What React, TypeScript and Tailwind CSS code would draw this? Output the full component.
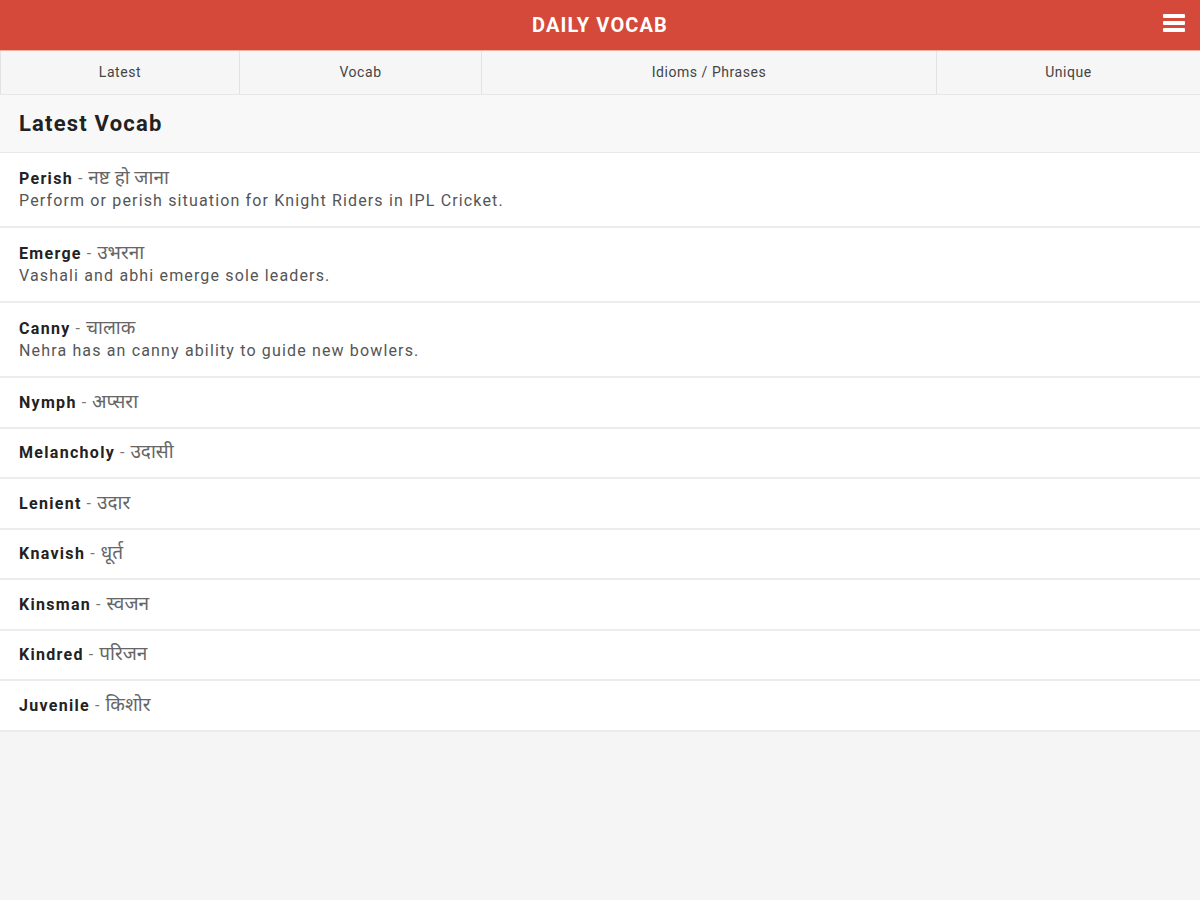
import React from "react";

const words: { w: string; h: string; s?: string }[] = [
  { w: "Perish", h: "नष्ट हो जाना", s: "Perform or perish situation for Knight Riders in IPL Cricket." },
  { w: "Emerge", h: "उभरना", s: "Vashali and abhi emerge sole leaders." },
  { w: "Canny", h: "चालाक", s: "Nehra has an canny ability to guide new bowlers." },
  { w: "Nymph", h: "अप्सरा" },
  { w: "Melancholy", h: "उदासी" },
  { w: "Lenient", h: "उदार" },
  { w: "Knavish", h: "धूर्त" },
  { w: "Kinsman", h: "स्वजन" },
  { w: "Kindred", h: "परिजन" },
  { w: "Juvenile", h: "किशोर" },
];

const font = { fontFamily: "Roboto, 'Noto Sans', 'Noto Sans Devanagari', 'Lohit Devanagari', sans-serif" };

export default function App() {
  return (
    <div className="min-h-[900px] w-[1200px] bg-[#f5f5f5]" style={font}>
      <header className="relative flex h-[50px] items-center justify-center bg-[#d44939] shadow-[0_1px_0_#f0b0a0]">
        <h1 className="text-[20px] font-bold tracking-[1.1px] text-white">DAILY VOCAB</h1>
        <div className="absolute right-[15px] top-[14px] flex w-[22px] flex-col gap-[3px]">
          <span className="h-[4px] w-full rounded-[1px] bg-white" />
          <span className="h-[4px] w-full rounded-[1px] bg-white" />
          <span className="h-[4px] w-full rounded-[1px] bg-white" />
        </div>
      </header>
      <nav className="grid h-[45px] grid-cols-[240px_242px_455px_1fr] border-b border-[#e6e6e6] bg-[#f6f6f6] text-[14px] tracking-[0.55px] text-[#444]">
        <div className="flex items-center justify-center border-x border-[#e2e2e2]">Latest</div>
        <div className="flex items-center justify-center border-r border-[#e2e2e2]">Vocab</div>
        <div className="flex items-center justify-center border-r border-[#e2e2e2]">Idioms / Phrases</div>
        <div className="flex items-center justify-center">Unique</div>
      </nav>
      <div className="flex h-[58px] items-center border-b border-[#e8e8e8] bg-[#f8f8f8] px-[19px]">
        <h2 className="text-[22px] font-bold tracking-[1.2px] text-[#222]">Latest Vocab</h2>
      </div>
      <ul className="bg-white">
        {words.map((x) => (
          <li
            key={x.w}
            className={`flex flex-col justify-center border-b-2 border-[#ececec] px-[19px] ${x.s ? "h-[75px]" : "h-[50.5px]"}`}
          >
            <div className="text-[16px] leading-[22px]">
              <span className="font-bold tracking-[1.3px] text-[#222]">{x.w}</span>
              <span className="tracking-[1px] text-[#777]"> - </span>
              <span className="text-[19px] text-[#666]">{x.h}</span>
            </div>
            {x.s && <div className="text-[16px] leading-[22px] tracking-[1.15px] text-[#555]">{x.s}</div>}
          </li>
        ))}
      </ul>
    </div>
  );
}
